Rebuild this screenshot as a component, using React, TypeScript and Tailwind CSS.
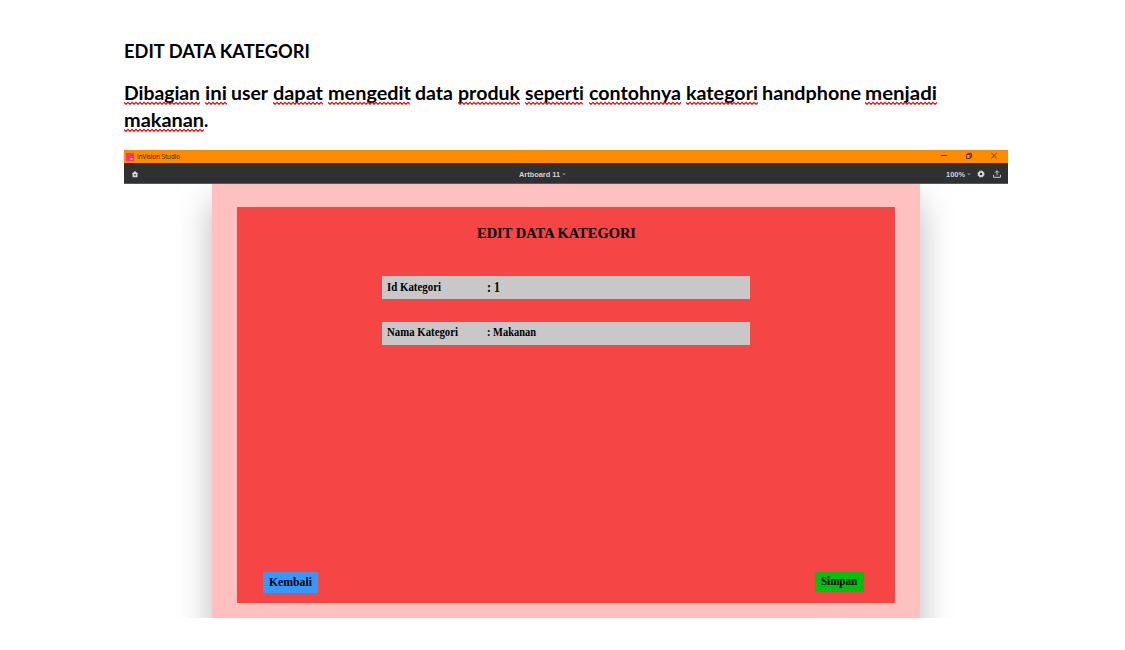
import { useLayoutEffect, useRef } from "react";
import type { ReactNode } from "react";

/* Condenses or expands a run of text so that it fills the given width. */
function Fit({ width, className = "", children }: { width: number; className?: string; children: ReactNode }) {
  const ref = useRef<HTMLSpanElement>(null);
  useLayoutEffect(() => {
    const el = ref.current;
    if (!el) return;
    el.style.transform = "none";
    const natural = el.getBoundingClientRect().width;
    if (natural > 0) el.style.transform = `scaleX(${width / natural})`;
  }, [width]);
  return (
    <span className={`block shrink-0 whitespace-nowrap ${className}`} style={{ width }}>
      <span ref={ref} className="inline-block origin-left">
        {children}
      </span>
    </span>
  );
}

function Squiggle({ width }: { width: number }) {
  const points: string[] = [];
  for (let x = 0, i = 0; x <= width; x += 2, i++) points.push(`${x},${i % 2 ? 3.3 : 1.3}`);
  return (
    <svg className="absolute top-[21px] left-0" width={width} height="4" aria-hidden="true">
      <polyline points={points.join(" ")} fill="none" stroke="#f40000" strokeWidth="1.2" />
    </svg>
  );
}

type WordData = { text: string; width: number; gap: number; marked?: boolean };

const line1: WordData[] = [
  { text: "Dibagian", width: 76, gap: 5, marked: true },
  { text: "ini", width: 22, gap: 4, marked: true },
  { text: "user", width: 37, gap: 5 },
  { text: "dapat", width: 50, gap: 5, marked: true },
  { text: "mengedit", width: 83, gap: 4, marked: true },
  { text: "data", width: 38, gap: 5 },
  { text: "produk", width: 62, gap: 5, marked: true },
  { text: "seperti", width: 59, gap: 5, marked: true },
  { text: "contohnya", width: 92, gap: 5, marked: true },
  { text: "kategori", width: 72, gap: 4, marked: true },
  { text: "handphone", width: 99, gap: 4, marked: false },
  { text: "menjadi", width: 72, gap: 0, marked: true },
];

function Word({ text, width, gap, marked }: WordData) {
  return (
    <span className="relative block" style={{ marginRight: gap }}>
      <Fit width={width}>{text}</Fit>
      {marked && <Squiggle width={width} />}
    </span>
  );
}

function TitleBar() {
  return (
    <div className="flex h-[13px] items-center bg-[#ff8c00] pl-[2px] text-[7px] leading-[13px] text-[#2a1a03]">
      <svg width="8" height="8" viewBox="0 0 8 8" aria-hidden="true">
        <rect width="8" height="8" fill="#ff3366" />
        <rect x="4.6" y="5" width="1.8" height="1.8" fill="#fff" />
      </svg>
      <Fit width={43} className="ml-[3px] font-['Open_Sans',sans-serif]">InVision Studio</Fit>
      <svg className="ml-auto" width="70" height="13" viewBox="0 0 70 13" fill="none" stroke="#4a2c06" aria-hidden="true">
        <path d="M3 5.5h6" />
        <path d="M28.5 4.5h3.8v4h-3.8z M29.7 4.3V3.4h3.9v4h-1" strokeWidth="0.9" />
        <path d="M53.4 3l5.4 5.4M58.8 3l-5.4 5.4" strokeWidth="0.9" />
      </svg>
    </div>
  );
}

function Caret() {
  return (
    <svg width="4" height="3" viewBox="0 0 4 3" aria-hidden="true">
      <path d="M0.2 0.5h3.6L2 2.2z" fill="#8f9092" />
    </svg>
  );
}

function ToolBar() {
  return (
    <div className="grid h-[21px] grid-cols-[1fr_auto_1fr] items-center border-b border-[#58595b] bg-[#2f3032] font-['Liberation_Sans',sans-serif] text-[7.5px] leading-[20px] font-bold text-[#d2d2d2]">
      <svg className="ml-[7px]" width="8" height="8" viewBox="0 0 8 8" aria-hidden="true">
        <path d="M4 0.9L7.4 4H6.5V7.2H1.5V4H0.6z" fill="#d5d6d8" />
        <circle cx="4" cy="4.9" r="0.8" fill="#2f3032" />
      </svg>
      <div className="flex items-center gap-[2px] pr-[47px]">
        <Fit width={41} className="pt-[2px]">Artboard 11</Fit>
        <Caret />
      </div>
      <div className="flex items-center justify-end pr-[7px]">
        <Fit width={19} className="pt-[2px]">100%</Fit>
        <span className="ml-[2px] flex"><Caret /></span>
        <svg className="ml-[6px]" width="8" height="8" viewBox="0 0 8 8" fill="none" aria-hidden="true">
          <circle cx="4" cy="4" r="2.2" stroke="#dedede" strokeWidth="1.7" />
          <circle cx="4" cy="4" r="3.2" stroke="#dedede" strokeWidth="0.8" strokeDasharray="1.4 1.113" />
        </svg>
        <svg className="ml-[8px]" width="8" height="8" viewBox="0 0 8 8" fill="none" stroke="#dedede" strokeWidth="0.9" aria-hidden="true">
          <path d="M0.6 4.8v2.5h6.8V4.8M4 5.4V0.9M2 2.7l2-2 2 2" />
        </svg>
      </div>
    </div>
  );
}

export default function App() {
  return (
    <main className="h-[650px] w-[1125px] overflow-hidden bg-white pt-[37px] pl-[124px] font-['Lato','Noto_Sans',sans-serif] text-black [font-variant-ligatures:none]">
      <h1 className="text-[18px] leading-[28px] font-bold">
        <Fit width={186}>EDIT DATA KATEGORI</Fit>
      </h1>
      <div className="mt-[15px] text-[18px] leading-[27px] font-bold">
        <p className="flex h-[27px]">
          {line1.map((word) => (
            <Word key={word.text} {...word} />
          ))}
        </p>
        <p className="flex h-[27px]">
          <Word text="makanan" width={80} gap={0} marked />
          <span>.</span>
        </p>
      </div>

      <section className="mt-[16px] h-[468px] w-[884px] overflow-hidden">
        <TitleBar />
        <ToolBar />
        <div className="h-[434px] overflow-hidden bg-white pl-[88px]">
          <div className="h-[470px] w-[708px] bg-[#ffc0c0] px-[25px] pt-[23px] font-['Liberation_Serif',serif] font-bold shadow-[0_18px_32px_rgba(0,0,0,0.28)]">
            <div className="flex h-[396px] flex-col bg-[#f54545] text-black">
              <h2 className="mt-[16px] ml-[240px] text-[15px] leading-[20px]">
                <Fit width={159}>EDIT DATA KATEGORI</Fit>
              </h2>
              <div className="mt-[33px] ml-[145px] flex h-[23px] w-[368.4px] bg-[#c8c8c8] pl-[5px] leading-[22px]">
                <Fit width={54} className="text-[12px]">Id Kategori</Fit>
                <Fit width={13} className="ml-[46px] text-[15px] leading-[23px]">: 1</Fit>
              </div>
              <div className="mt-[23px] ml-[145px] flex h-[23px] w-[368.4px] bg-[#c8c8c8] pl-[5px] text-[12px] leading-[21px]">
                <Fit width={71}>Nama Kategori</Fit>
                <Fit width={49} className="ml-[29px]">: Makanan</Fit>
              </div>
              <div className="mt-auto mb-[10px] flex items-start justify-between pr-[31px] pl-[26px]">
                <button className="flex h-[21px] w-[55px] items-start bg-[#3399ff] pl-[6px] text-left text-[13px] leading-[20px]">
                  <Fit width={43}>Kembali</Fit>
                </button>
                <button className="flex h-[20px] w-[49px] items-start bg-[#00c20c] pl-[6px] text-left text-[12px] leading-[18px]">
                  <Fit width={36}>Simpan</Fit>
                </button>
              </div>
            </div>
          </div>
        </div>
      </section>
    </main>
  );
}
